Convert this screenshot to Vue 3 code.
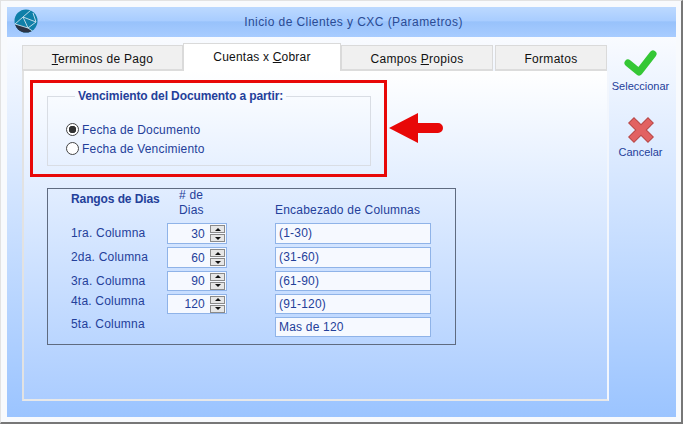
<template>
    <div class="frame">
        <div class="window">
            <div class="titlebar">
                <svg class="logo" width="24" height="24" viewBox="0 0 24 24">
                    <defs>
                        <clipPath id="globe"><circle cx="12" cy="12" r="11.5" /></clipPath>
                    </defs>
                    <circle cx="12" cy="12" r="11.5" fill="#0f7fa8" />
                    <g clip-path="url(#globe)">
                        <path d="M0 15 L8 17 L14 19 L20 24 L0 24 Z" fill="#2b3345" />
                        <path d="M1 15 L9 8 L17 1 M9 8 L22 13 M9 8 L14 19 L22 13 M1 15 L14 19 L20 23 M22 13 L19 4" fill="none" stroke="#cfe3ee" stroke-width="0.9" />
                    </g>
                </svg>
                <span class="title">Inicio de Clientes y CXC (Parametros)</span>
            </div>
            <div class="body">
                <div class="content">
                    <div class="tabs">
                        <div class="tab tab1"><u>T</u>erminos de Pago</div>
                        <div class="tab tab2 active">Cuentas x <u>C</u>obrar</div>
                        <div class="tab tab3">Campos <u>P</u>ropios</div>
                        <div class="tab tab4">Formatos</div>
                    </div>
                    <div class="panel">
                        <fieldset class="group">
                            <legend>Vencimiento del Documento a partir:</legend>
                            <div class="radio"><span class="dot checked"></span>Fecha de Documento</div>
                            <div class="radio"><span class="dot"></span>Fecha de Vencimiento</div>
                        </fieldset>

                        <div class="ranges">
                            <div class="head-label">Rangos de Dias</div>
                            <div class="head-days"># de<br />Dias</div>
                            <div class="head-cols">Encabezado de Columnas</div>

                            <template v-for="row in rows" :key="row.label">
                                <div class="label" :class="{ raised: row.raised }">{{ row.label }}</div>
                                <div v-if="row.days" class="spinner">
                                    <span class="value">{{ row.days }}</span>
                                    <span class="spin">
                                        <span class="spin-btn"><i class="up"></i></span>
                                        <span class="spin-btn"><i class="down"></i></span>
                                    </span>
                                </div>
                                <div class="text-input">{{ row.heading }}</div>
                            </template>
                        </div>
                    </div>
                </div>
                <div class="actions">
                    <div class="action select">
                        <svg width="36" height="28" viewBox="0 0 36 28">
                            <path d="M6 14 L17 23 L31 5" fill="none" stroke="#35c735" stroke-width="7" stroke-linecap="round" stroke-linejoin="round" />
                        </svg>
                        <span>Seleccionar</span>
                    </div>
                    <div class="action cancel">
                        <svg width="28" height="28" viewBox="0 0 28 28">
                            <path d="M7 7 L21 21 M21 7 L7 21" fill="none" stroke="#b94a4a" stroke-width="8.5" stroke-linecap="square" />
                            <path d="M7 7 L21 21 M21 7 L7 21" fill="none" stroke="#e26262" stroke-width="6.5" stroke-linecap="square" />
                        </svg>
                        <span>Cancelar</span>
                    </div>
                </div>
            </div>
        </div>

        <!-- annotation drawn over the screenshot -->
        <div class="red-box"></div>
        <svg class="arrow" width="56" height="32" viewBox="0 0 56 32">
            <path d="M1 16 L30 1 L30 11 L50 11 A5 5 0 0 1 50 21 L30 21 L30 31 Z" fill="#e80808" />
        </svg>
    </div>
</template>

<script setup>
const rows = [
    { label: '1ra. Columna', days: 30, heading: '(1-30)' },
    { label: '2da. Columna', days: 60, heading: '(31-60)' },
    { label: '3ra. Columna', days: 90, heading: '(61-90)' },
    { label: '4ta. Columna', days: 120, heading: '(91-120)', raised: true },
    { label: '5ta. Columna', heading: 'Mas de 120', raised: true }
];
</script>

<style>
html, body {
    margin: 0;
    background: #f8fafd;
}
</style>

<style scoped>
.frame {
    position: relative;
    box-sizing: border-box;
    width: 683px;
    height: 424px;
    padding: 6px 5px 5px 6px;
    background: #f8fafd;
    border-top: 1px solid #e2e2e2;
    border-left: 1px solid #e2e2e2;
    border-right: 2px solid #777;
    border-bottom: 2px solid #777;
    font-family: "Liberation Sans", Arial, sans-serif;
    font-size: 12px;
    letter-spacing: 0.2px;
    color: #24409a;
    overflow: hidden;
}

.window {
    height: 100%;
    display: flex;
    flex-direction: column;
}

.titlebar {
    height: 30px;
    flex: none;
    display: flex;
    align-items: center;
    justify-content: center;
    position: relative;
    background: linear-gradient(to bottom, #bcd9ff 0%, #a9cdff 45%, #98c2fb 50%, #a8ccff 100%);
}

.logo {
    position: absolute;
    left: 7px;
    top: 2px;
}

.title {
    margin-left: 24px;
    letter-spacing: 0.43px;
    color: #2a4b94;
}

.body {
    flex: 1;
    display: flex;
    min-height: 0;
    background: linear-gradient(to bottom, #f9fbff 0%, #9bc4ff 100%);
}

.content {
    width: 587px;
    margin: 6px 0 16px 15px;
    display: flex;
    flex-direction: column;
}

.tabs {
    display: flex;
    align-items: flex-end;
    height: 28px;
    flex: none;
}

.tab {
    box-sizing: border-box;
    height: 26px;
    line-height: 26px;
    text-align: center;
    letter-spacing: 0.3px;
    color: #111;
    background: #f0f0f0;
    border: 1px solid #dadada;
    border-bottom: 2px solid #dcdcdc;
}

.tab1 { width: 161px; }
.tab2 { width: 158px; }
.tab3 { width: 152px; }
.tab4 { width: 112px; margin-left: 2px; }

.tab.active {
    height: 28px;
    line-height: 27px;
    letter-spacing: 0.2px;
    background: #fff;
    border-bottom: 0;
}

.panel {
    flex: 1;
    box-sizing: border-box;
    padding: 18px 0 0 23px;
    background: linear-gradient(to bottom, #ffffff 0%, #accdff 100%);
    border-left: 2px solid #e2e2e2;
    border-bottom: 2px solid #e8e8e8;
    border-right: 2px solid #f2f6fd;
}

.group {
    box-sizing: border-box;
    width: 324px;
    height: 77px;
    margin: 0;
    padding: 17px 0 0 18px;
    border: 1px solid #d9dde4;
}

.group legend {
    margin-left: 9px;
    padding: 0 3px;
    font-weight: bold;
    line-height: 14px;
    letter-spacing: -0.1px;
    color: #24409a;
}

.radio {
    display: flex;
    align-items: center;
    height: 19px;
}

.dot {
    box-sizing: border-box;
    width: 13px;
    height: 13px;
    margin-right: 3px;
    border: 1px solid #444;
    border-radius: 50%;
    background: #fff;
}

.dot.checked {
    background: radial-gradient(circle, #333 0 3.5px, #fff 4px);
}

.ranges {
    box-sizing: border-box;
    width: 409px;
    height: 157px;
    margin-top: 22px;
    padding-left: 23px;
    border: 1px solid #5f6b80;
    display: grid;
    grid-template-columns: 96px 60px 48px 156px;
    grid-template-rows: 31px 21px 21px 20px 20px 20px;
    row-gap: 3px;
}

.head-label {
    font-weight: bold;
    line-height: 20px;
    letter-spacing: -0.1px;
}

.head-days {
    margin-top: -1px;
    padding-left: 12px;
    line-height: 15px;
}

.head-cols {
    grid-column: 4;
    padding-top: 14px;
    line-height: 14px;
    white-space: nowrap;
}

.label {
    grid-column: 1;
    line-height: 20px;
}

.label.raised {
    line-height: 14px;
}

.spinner,
.text-input {
    box-sizing: border-box;
    border: 1px solid #8fb3e8;
    background: #f6f9ff;
}

.spinner {
    grid-column: 2;
    display: flex;
    align-items: center;
    justify-content: flex-end;
}

.value {
    margin-right: 5px;
}

.spin {
    display: flex;
    flex-direction: column;
    gap: 1px;
    margin-right: 1px;
}

.spin-btn {
    box-sizing: border-box;
    width: 15px;
    height: 8px;
    display: flex;
    align-items: center;
    justify-content: center;
    background: #e6e6e6;
    border: 1px solid #8a8a8a;
}

.up,
.down {
    width: 0;
    height: 0;
    border-left: 3px solid transparent;
    border-right: 3px solid transparent;
}

.up { border-bottom: 3px solid #111; }
.down { border-top: 3px solid #111; }

.text-input {
    grid-column: 4;
    padding-left: 3px;
    line-height: 18px;
}

.actions {
    flex: 1;
    display: flex;
    flex-direction: column;
    align-items: center;
    padding: 12px 4px 0 0;
    font-size: 11px;
    letter-spacing: 0;
}

.action {
    display: flex;
    flex-direction: column;
    align-items: center;
}

.action svg {
    display: block;
}

.action span {
    line-height: 14px;
    color: #24409a;
}

.select span {
    margin-top: 2px;
}

.cancel {
    margin-top: 23px;
}

.cancel span {
    margin-top: 1px;
}

.red-box {
    position: absolute;
    left: 29px;
    top: 79px;
    width: 357px;
    height: 97px;
    box-sizing: border-box;
    border: 3px solid #e80808;
}

.arrow {
    position: absolute;
    left: 387px;
    top: 111px;
}
</style>
